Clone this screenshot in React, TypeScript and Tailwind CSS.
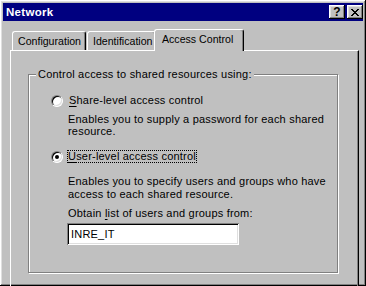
import React from 'react';

const bevelOut =
  'shadow-[inset_-1px_-1px_#000,inset_1px_1px_#fff,inset_-2px_-2px_#808080,inset_2px_2px_#dfdfdf]';

const Radio = ({ checked }: { checked?: boolean }) => (
  <div className="relative w-[12px] h-[12px] shrink-0 rounded-full bg-white border border-t-[#808080] border-l-[#808080] border-b-white border-r-white">
    <div className="absolute inset-0 rounded-full shadow-[inset_1px_1px_#000,inset_-1px_-1px_#dfdfdf]" />
    {checked && (
      <div className="absolute left-[3px] top-[3px] w-[4px] h-[4px] rounded-full bg-black" />
    )}
  </div>
);

const Tab = ({ label, width, selected }: { label: string; width: number; selected?: boolean }) => (
  <div
    style={{ width }}
    className={
      selected
        ? 'relative z-10 -mx-[2px] -mb-px h-[22px] pt-[3px] pl-[7px] whitespace-nowrap overflow-hidden text-[10.6px] tracking-normal bg-[#c0c0c0] border-l border-t border-white border-r border-r-black rounded-t-[3px] shadow-[inset_-1px_0_#808080]'
        : 'h-[19px] pt-[3px] pl-[5px] whitespace-nowrap overflow-hidden text-[10.6px] tracking-normal bg-[#c0c0c0] border-l border-t border-white border-r border-r-black rounded-t-[3px] shadow-[inset_-1px_0_#808080]'
    }
  >
    {label}
  </div>
);

const App: React.FC = () => {
  return (
    <div
      className={`w-[366px] h-[286px] overflow-hidden bg-[#c0c0c0] p-[3px] font-['Liberation_Sans',Arial,sans-serif] text-[11px] leading-[13px] tracking-[0.2px] text-black ${bevelOut}`}
    >
      {/* Title bar */}
      <div className="h-[18px] bg-[#000080] flex items-center justify-between pl-[3px] pr-0">
        <span className="text-white font-bold text-[11.5px] tracking-[0.3px]">Network</span>
        <div className="flex gap-[2px]">
          <div className={`w-[16px] h-[14px] bg-[#c0c0c0] flex items-center justify-center font-bold text-[12px] leading-none ${bevelOut}`}>
            ?
          </div>
          <div className={`w-[16px] h-[14px] bg-[#c0c0c0] flex items-center justify-center ${bevelOut}`}>
            <svg width="8" height="7" viewBox="0 0 8 7" shapeRendering="crispEdges">
              <path d="M0 0h2v1h-2zM6 0h2v1h-2zM1 1h2v1h-2zM5 1h2v1h-2zM2 2h4v1h-4zM3 3h2v1h-2zM2 4h4v1h-4zM1 5h2v1h-2zM5 5h2v1h-2zM0 6h2v1h-2zM6 6h2v1h-2z" fill="#000" />
            </svg>
          </div>
        </div>
      </div>

      {/* Tabs */}
      <div className="ml-[7px] mt-[8px] flex items-end pl-[2px]">
        <Tab label="Configuration" width={74} />
        <div className="w-px" />
        <Tab label="Identification" width={69} />
        <Tab label="Access Control" width={90} selected />
      </div>

      {/* Panel */}
      <div className="ml-[7px] w-[349px] h-[240px] border-l border-t border-white border-r border-r-black shadow-[inset_-1px_0_#808080] pt-[23px] pl-[17px]">
        {/* Group box */}
        <div className="relative w-[310px] h-[199px] border border-[#808080] shadow-[inset_1px_1px_#fff,1px_1px_#fff]">
          <span className="absolute left-[7px] -top-[7px] px-[2px] bg-[#c0c0c0]">
            Control access to shared resources using:
          </span>
          <div className="pl-[22px] pt-[19px]">
            <div className="flex items-center h-[13px]">
              <Radio />
              <span className="ml-[5px] pl-px">
                <span className="underline underline-offset-2">S</span>hare-level access control
              </span>
            </div>
            <div className="ml-[17px] mt-[6px] leading-[12px]">
              Enables you to supply a password for each shared
              <br />
              resource.
            </div>

            <div className="flex items-center h-[13px] mt-[13px]">
              <Radio checked />
              <span className="ml-[4px] border border-dotted border-black leading-[11px]">
                <span className="underline underline-offset-2">U</span>ser-level access control
              </span>
            </div>
            <div className="ml-[17px] mt-[12px]">
              Enables you to specify users and groups who have
              <br />
              access to each shared resource.
            </div>
            <div className="ml-[17px] mt-[6px]">
              Obtain <span className="underline underline-offset-2">l</span>ist of users and groups from:
            </div>
            <div className="ml-[16px] mt-[3px] w-[172px] h-[22px] bg-white flex items-center pl-[4px] shadow-[inset_1px_1px_#808080,inset_-1px_-1px_#fff,inset_2px_2px_#000,inset_-2px_-2px_#dfdfdf]">
              INRE_IT
            </div>
          </div>
        </div>
      </div>
    </div>
  );
};

export default App;
